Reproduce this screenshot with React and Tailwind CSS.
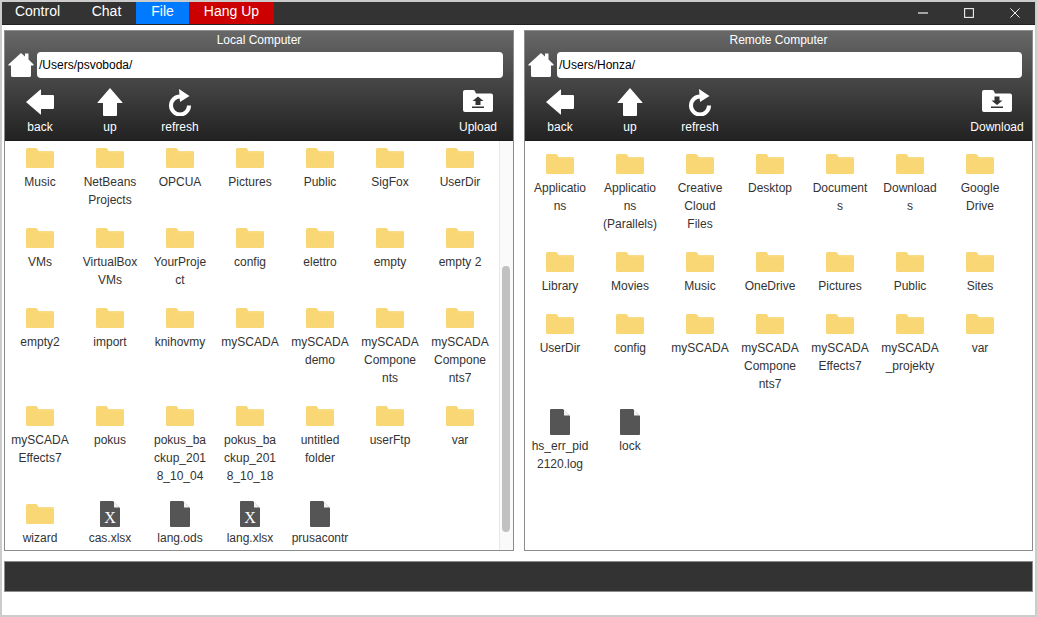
const F = 'folder', D = 'doc', X = 'xls';

const leftItems = [
  [F, 'Music'], [F, 'NetBeans Projects'], [F, 'OPCUA'], [F, 'Pictures'], [F, 'Public'], [F, 'SigFox'], [F, 'UserDir'],
  [F, 'VMs'], [F, 'VirtualBox VMs'], [F, 'YourProject'], [F, 'config'], [F, 'elettro'], [F, 'empty'], [F, 'empty 2'],
  [F, 'empty2'], [F, 'import'], [F, 'knihovmy'], [F, 'mySCADA'], [F, 'mySCADA demo'], [F, 'mySCADAComponents'], [F, 'mySCADAComponents7'],
  [F, 'mySCADAEffects7'], [F, 'pokus'], [F, 'pokus_backup_2018_10_04'], [F, 'pokus_backup_2018_10_18'], [F, 'untitled folder'], [F, 'userFtp'], [F, 'var'],
  [F, 'wizard'], [X, 'cas.xlsx'], [D, 'lang.ods'], [X, 'lang.xlsx'], [D, 'prusacontr'],
];

const rightItems = [
  [F, 'Applications'], [F, 'Applications (Parallels)'], [F, 'Creative Cloud Files'], [F, 'Desktop'], [F, 'Documents'], [F, 'Downloads'], [F, 'Google Drive'],
  [F, 'Library'], [F, 'Movies'], [F, 'Music'], [F, 'OneDrive'], [F, 'Pictures'], [F, 'Public'], [F, 'Sites'],
  [F, 'UserDir'], [F, 'config'], [F, 'mySCADA'], [F, 'mySCADAComponents7'], [F, 'mySCADAEffects7'], [F, 'mySCADA_projekty'], [F, 'var'],
  [D, 'hs_err_pid2120.log'], [D, 'lock'],
];

function FolderIcon() {
  return (
    <svg width="28" height="20" viewBox="0 0 28 20" className="block">
      <path d="M0 1.5Q0 0 1.5 0H9.5Q11 0 11.6 1.2L12.3 3H26.5Q28 3 28 4.5V18.5Q28 20 26.5 20H1.5Q0 20 0 18.5Z" fill="#f9d775" />
      <path d="M12.6 3.6H28V4.3H12.9Z" fill="#fbe29c" />
    </svg>
  );
}

function FileIcon({ x }) {
  return (
    <div className="relative w-5 h-[26px]">
      <svg width="20" height="26" viewBox="0 0 20 26" className="block">
        <path d="M1 0H13L20 7V25Q20 26 19 26H1Q0 26 0 25V1Q0 0 1 0Z" fill="#555555" />
        <path d="M14 0.6L19.6 6.4H14Z" fill="#f2f2f2" />
      </svg>
      {x && (
        <span className="absolute left-0 right-0 top-[8px] text-center text-white text-[16px] leading-[18px] font-['Liberation_Serif',serif]">
          X
        </span>
      )}
    </div>
  );
}

function Item({ type, name }) {
  return (
    <div className="w-[70px] px-[6px] pb-[15px] flex flex-col items-center">
      <div className="h-[28px] mb-[1px] flex items-center justify-center">
        {type === F ? <FolderIcon /> : <FileIcon x={type === X} />}
      </div>
      <div className="w-full text-center text-[12px] leading-[18px] text-[#333333] break-words">{name}</div>
    </div>
  );
}

function HomeIcon() {
  return (
    <svg width="26" height="26" viewBox="0 0 26 26" className="block shrink-0">
      <path
        d="M13 1L17 4.4V1.5H20.5V7.4L25.6 12.6Q26 13.6 25 13.6H23V23.5Q23 25 21.5 25H4.5Q3 25 3 23.5V13.6H1Q0 13.6 0.4 12.6Z"
        fill="#ffffff"
      />
    </svg>
  );
}

function BackIcon() {
  return (
    <svg width="28" height="26" viewBox="0 0 28 26" className="block">
      <path d="M0 13L14.5 0.5Q15 0.5 15 1V6H27Q28 6 28 7V19Q28 20 27 20H15V25Q15 25.5 14.5 25.5Z" fill="#ffffff" />
    </svg>
  );
}

function UpIcon() {
  return (
    <svg width="26" height="28" viewBox="0 0 26 28" className="block">
      <path d="M13 0L25.5 14.5Q25.5 15 25 15H20V27Q20 28 19 28H7Q6 28 6 27V15H1Q0.5 15 0.5 14.5Z" fill="#ffffff" />
    </svg>
  );
}

function RefreshIcon() {
  return (
    <svg width="26" height="28" viewBox="0 0 26 28" className="block">
      <path d="M13 8.5A9 9 0 1 0 22 17.5" fill="none" stroke="#ffffff" strokeWidth="4" />
      <path d="M12 1L22.5 8L13 14Z" fill="#ffffff" />
    </svg>
  );
}

function TransferIcon({ down }) {
  return (
    <svg width="30" height="22" viewBox="0 0 30 22" className="block">
      <path d="M0 2Q0 0 2 0H10Q11.5 0 12 1.2L13 3.5H28Q30 3.5 30 5.5V20Q30 22 28 22H2Q0 22 0 20Z" fill="#ffffff" />
      {down ? (
        <path d="M12.5 6.5H17.5V10.5H20.5L15 15L9.5 10.5H12.5ZM9 16.4H21V18H9Z" fill="#333333" />
      ) : (
        <path d="M15 6.5L20.5 11H17.5V15H12.5V11H9.5ZM9 16.4H21V18H9Z" fill="#333333" />
      )}
    </svg>
  );
}

function ToolButton({ icon, label, iconShift }) {
  return (
    <div className="w-[70px] flex flex-col items-center">
      <div className={`h-[30px] flex items-center justify-center ${iconShift || ''}`}>{icon}</div>
      <div className="mt-[2px] text-[12px] leading-[16px] text-white">{label}</div>
    </div>
  );
}

function Panel({ title, path, action, actionIcon, items, scrolled, width }) {
  return (
    <div className={`${width} h-[521px] border border-[#8c8c8c] bg-white flex flex-col`}>
      <div className="h-[110px] shrink-0 bg-gradient-to-b from-[#686868] to-[#222222] border-b border-[#1a1a1a] flex flex-col">
        <div className="h-[19px] pt-[1px] text-center text-[12px] leading-[17px] text-white">{title}</div>
        <div className="flex items-center h-[26px] mt-[2px] pl-[3px] pr-[10px] gap-[3px]">
          <HomeIcon />
          <div className="flex-1 h-[26px] bg-white rounded-[4px] pl-[2px] text-[12px] leading-[26px] text-black">{path}</div>
        </div>
        <div className="flex items-start mt-[9px]">
          <ToolButton icon={<BackIcon />} label="back" />
          <ToolButton icon={<UpIcon />} label="up" />
          <ToolButton icon={<RefreshIcon />} label="refresh" />
          <div className="ml-auto">
            <ToolButton icon={actionIcon} label={action} iconShift="-translate-y-[1px]" />
          </div>
        </div>
      </div>
      <div className="flex-1 min-h-0 flex">
        <div className={`flex-1 min-w-0 overflow-hidden flex flex-wrap content-start ${scrolled ? 'pt-[3px]' : 'pt-[9px]'}`}>
          {items.map(([type, name], i) => (
            <Item key={i} type={type} name={name} />
          ))}
        </div>
        {scrolled && (
          <div className="w-[14px] shrink-0 bg-[#fafafa] border-l border-[#e8e8e8] pt-[125px] pl-[2px]">
            <div className="w-[8px] h-[266px] rounded-full bg-[#c1c1c1]" />
          </div>
        )}
      </div>
    </div>
  );
}

export default function App() {
  return (
    <div className="w-[1037px] h-[617px] bg-white border-2 border-[#cccccc] flex flex-col font-['Liberation_Sans',Arial,sans-serif] overflow-hidden">
      <div className="h-[23px] shrink-0 bg-[#333333] border-b border-[#222222] flex items-start text-[14px] leading-[18px] text-white">
        <div className="w-[75px] h-[22px] pr-[4px] text-center">Control</div>
        <div className="w-[59px] h-[22px] text-center">Chat</div>
        <div className="w-[53px] h-[22px] text-center bg-[#007bff]">File</div>
        <div className="w-[85px] h-[22px] text-center bg-[#cc0000]">Hang Up</div>
        <div className="ml-auto flex items-center h-[22px] pr-[15px] gap-[36px]">
          <svg width="10" height="2" viewBox="0 0 10 2" className="block"><path d="M0 1H10" stroke="#cccccc" strokeWidth="1.5" /></svg>
          <svg width="10" height="10" viewBox="0 0 10 10" className="block"><rect x="0.6" y="0.6" width="8.8" height="8.8" fill="none" stroke="#eeeeee" strokeWidth="1.1" /></svg>
          <svg width="10" height="10" viewBox="0 0 10 10" className="block"><path d="M0.4 0.4L9.6 9.6M9.6 0.4L0.4 9.6" stroke="#eeeeee" strokeWidth="1" /></svg>
        </div>
      </div>
      <div className="flex gap-[10px] pl-[2px] pr-[2px] mt-[5px]">
        <Panel width="w-[510px]" title="Local Computer" path="/Users/psvoboda/" action="Upload" actionIcon={<TransferIcon />} items={leftItems} scrolled />
        <Panel width="w-[509px]" title="Remote Computer" path="/Users/Honza/" action="Download" actionIcon={<TransferIcon down />} items={rightItems} />
      </div>
      <div className="h-[31px] shrink-0 mt-[10px] ml-[2px] mr-[2px] bg-[#333333] border border-[#8c8c8c]" />
    </div>
  );
}
